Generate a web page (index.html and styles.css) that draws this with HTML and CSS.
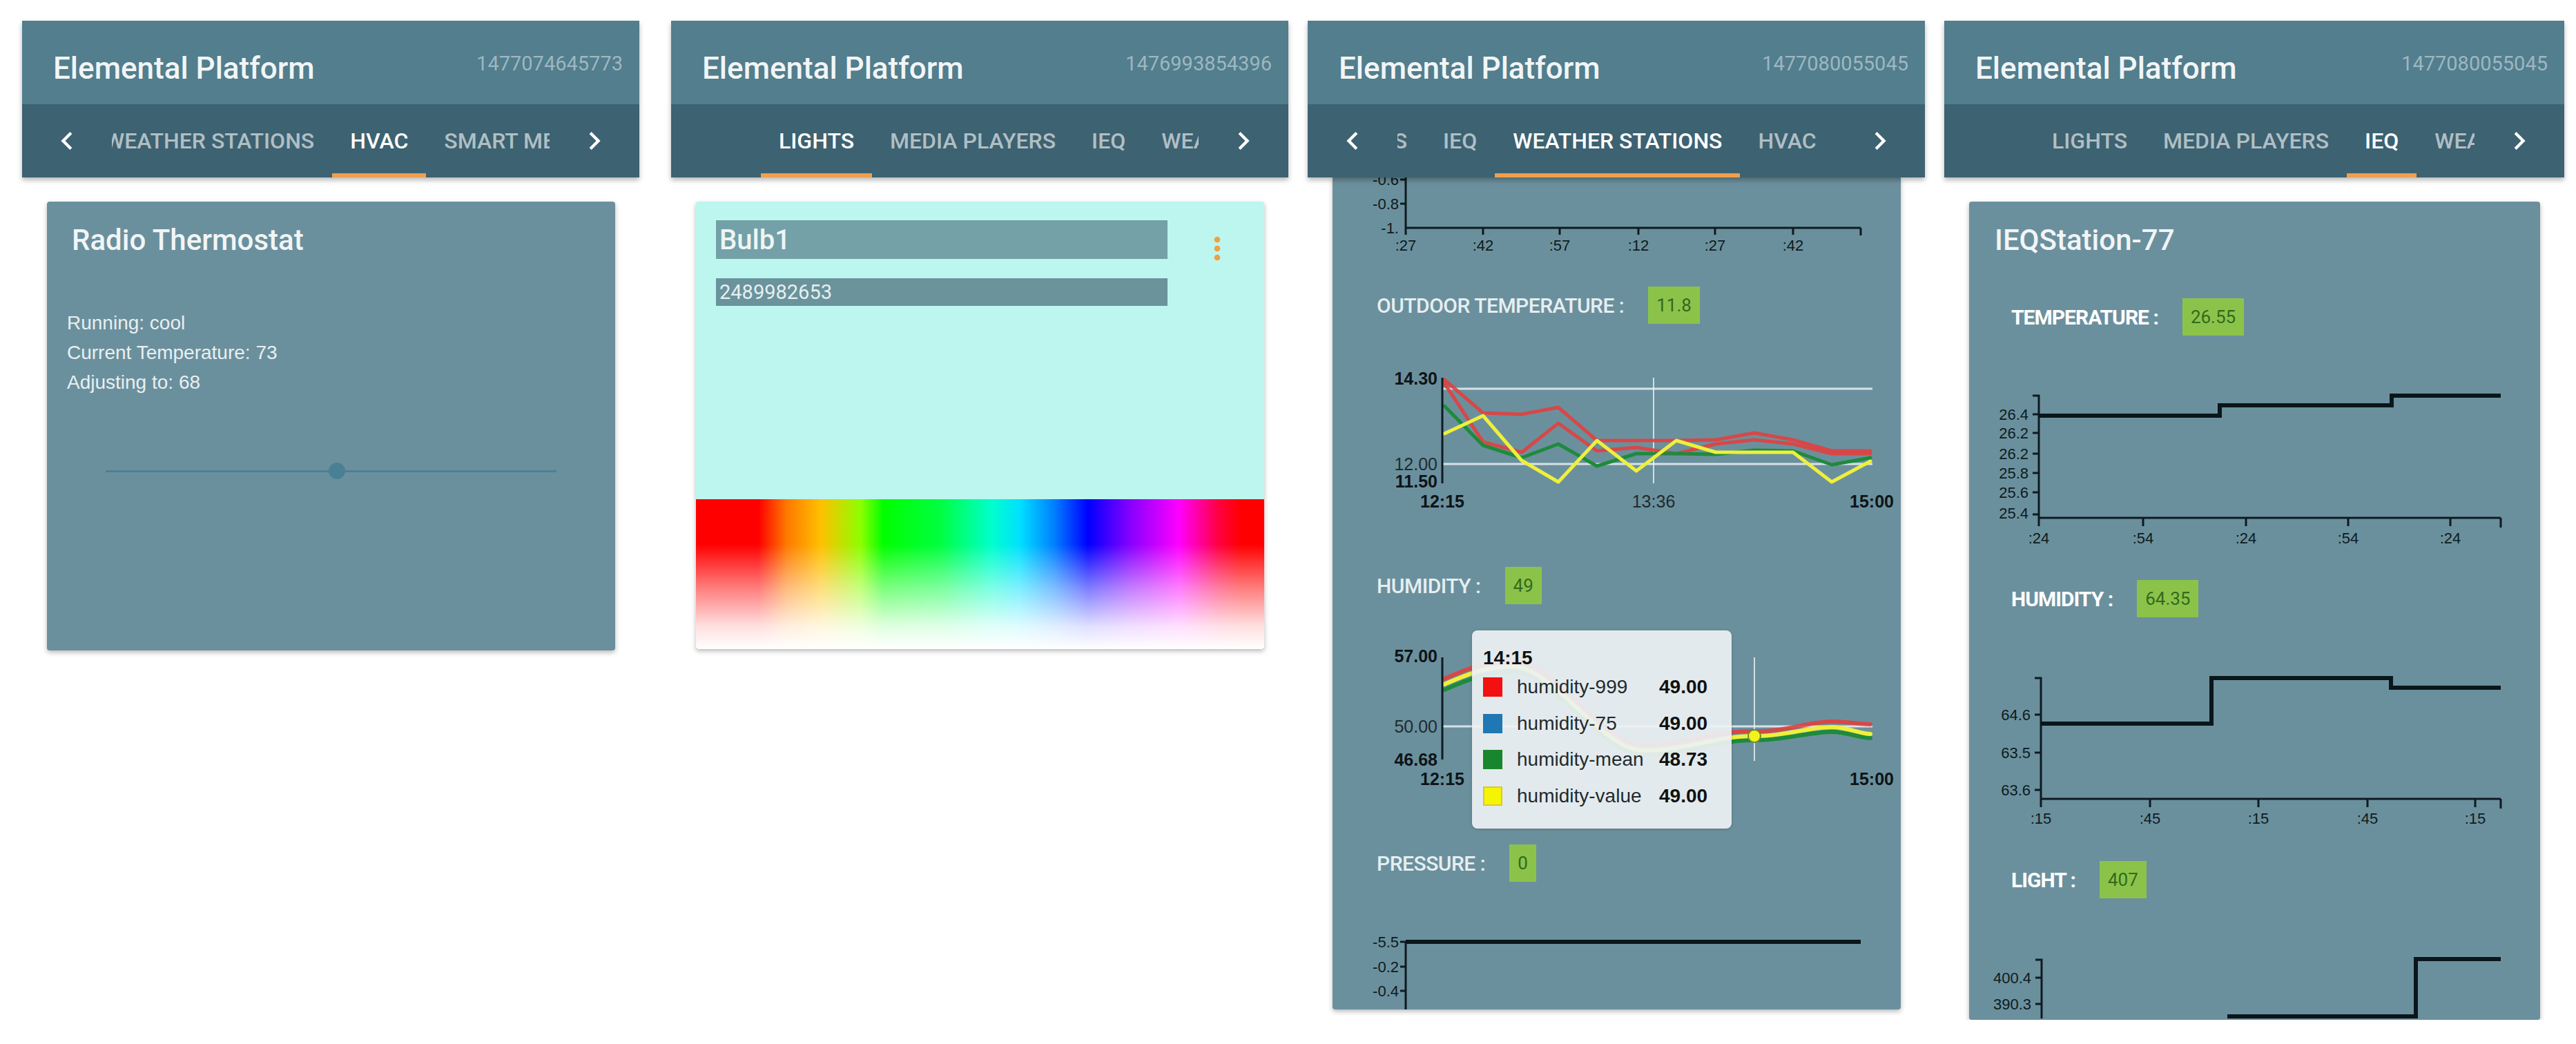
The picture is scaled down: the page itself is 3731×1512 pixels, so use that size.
FILE: index.html
```html
<!DOCTYPE html>
<html lang="en">
<head>
    <meta charset="UTF-8">
    <meta name="viewport" content="width=device-width, initial-scale=1.0">
    <title>Elemental Platform</title>
    <link rel="stylesheet" href="styles.css">
</head>
<body>
<main class="screens">

    <!-- HVAC screen -->
    <section class="screen screen-hvac">
        <header class="appbar">
            <div class="appbar-top">
                <h1>Elemental Platform</h1>
                <span class="stamp">1477074645773</span>
            </div>
            <nav class="tabbar">
                <button class="tab-arrow"><svg viewBox="0 0 24 24"><path d="M15.41 7.41L14 6l-6 6 6 6 1.41-1.41L10.83 12z"/></svg></button>
                <div class="tab-viewport">
                    <div class="tab-strip strip-hvac">
                        <span class="tab">Weather Stations</span>
                        <span class="tab active">HVAC</span>
                        <span class="tab">Smart Meters</span>
                    </div>
                </div>
                <button class="tab-arrow"><svg viewBox="0 0 24 24"><path d="M10 6L8.59 7.41 13.17 12l-4.58 4.59L10 18l6-6z"/></svg></button>
            </nav>
        </header>
        <div class="content">
            <article class="card thermostat">
                <h2 class="card-title">Radio Thermostat</h2>
                <div class="thermo-info">
                    <p>Running: cool</p>
                    <p>Current Temperature: 73</p>
                    <p>Adjusting to: 68</p>
                </div>
                <div class="slider">
                    <div class="slider-track"></div>
                    <div class="slider-thumb"></div>
                </div>
            </article>
        </div>
    </section>

    <!-- Lights screen -->
    <section class="screen screen-lights">
        <header class="appbar">
            <div class="appbar-top">
                <h1>Elemental Platform</h1>
                <span class="stamp">1476993854396</span>
            </div>
            <nav class="tabbar">
                <button class="tab-arrow hidden"><svg viewBox="0 0 24 24"><path d="M15.41 7.41L14 6l-6 6 6 6 1.41-1.41L10.83 12z"/></svg></button>
                <div class="tab-viewport">
                    <div class="tab-strip">
                        <span class="tab active">Lights</span>
                        <span class="tab">Media Players</span>
                        <span class="tab">IEQ</span>
                        <span class="tab">Weather Stations</span>
                    </div>
                </div>
                <button class="tab-arrow"><svg viewBox="0 0 24 24"><path d="M10 6L8.59 7.41 13.17 12l-4.58 4.59L10 18l6-6z"/></svg></button>
            </nav>
        </header>
        <div class="content">
            <article class="card bulb">
                <div class="bulb-head">
                    <div class="bulb-fields">
                        <div class="bulb-name">Bulb1</div>
                        <div class="bulb-id">2489982653</div>
                    </div>
                    <button class="more-btn"><svg viewBox="0 0 24 24"><path d="M12 8c1.1 0 2-.9 2-2s-.9-2-2-2-2 .9-2 2 .9 2 2 2zm0 2c-1.1 0-2 .9-2 2s.9 2 2 2 2-.9 2-2-.9-2-2-2zm0 6c-1.1 0-2 .9-2 2s.9 2 2 2 2-.9 2-2-.9-2-2-2z"/></svg></button>
                </div>
                <div class="color-picker"></div>
            </article>
        </div>
    </section>

    <!-- Weather stations screen (scrolled) -->
    <section class="screen screen-weather">
        <header class="appbar">
            <div class="appbar-top">
                <h1>Elemental Platform</h1>
                <span class="stamp">1477080055045</span>
            </div>
            <nav class="tabbar">
                <button class="tab-arrow"><svg viewBox="0 0 24 24"><path d="M15.41 7.41L14 6l-6 6 6 6 1.41-1.41L10.83 12z"/></svg></button>
                <div class="tab-viewport">
                    <div class="tab-strip strip-weather">
                        <span class="tab">Media Players</span>
                        <span class="tab">IEQ</span>
                        <span class="tab active">Weather Stations</span>
                        <span class="tab">HVAC</span>
                    </div>
                </div>
                <button class="tab-arrow"><svg viewBox="0 0 24 24"><path d="M10 6L8.59 7.41 13.17 12l-4.58 4.59L10 18l6-6z"/></svg></button>
            </nav>
        </header>
        <div class="content scrolled">
            <article class="card station weather">
                <svg class="chart" viewBox="0 0 824 130" width="824" height="130">
                    <path class="axis" d="M106,-20V73H765 M98,3H106 M98,38H106 M106,73V83 M218,73V83 M329,73V83 M443,73V83 M554,73V83 M667,73V83 M765,73V84"/>
                    <text class="tick" x="96" y="3" text-anchor="end">-0.6</text>
                    <text class="tick" x="96" y="38" text-anchor="end">-0.8</text>
                    <text class="tick" x="96" y="73" text-anchor="end">-1.</text>
                    <text class="tick" x="106" y="98" text-anchor="middle">:27</text>
                    <text class="tick" x="218" y="98" text-anchor="middle">:42</text>
                    <text class="tick" x="329" y="98" text-anchor="middle">:57</text>
                    <text class="tick" x="443" y="98" text-anchor="middle">:12</text>
                    <text class="tick" x="554" y="98" text-anchor="middle">:27</text>
                    <text class="tick" x="667" y="98" text-anchor="middle">:42</text>
                </svg>

                <div class="reading reading-first">
                    <span class="reading-label">Outdoor Temperature :</span>
                    <span class="reading-value">11.8</span>
                </div>

                <svg class="chart chart-gap" viewBox="0 260 824 240" width="824" height="240">
                    <path class="grid" d="M159,306H782 M159,415H782"/>
                    <path class="cross" d="M465,290V443"/>
                    <polyline class="series red" points="162,293 218,341 274,343 327,333 383,381 440,381 498,381 555,380 611,370 667,380 723,396 779,396"/>
                    <polyline class="series red" points="162,298 218,383 274,398 327,356 383,396 440,391 498,400 555,386 611,380 667,386 723,400 779,400"/>
                    <polyline class="series green" points="162,331 218,388 274,406 327,386 383,418 440,400 498,400 555,401 611,395 667,396 723,416 779,406"/>
                    <polyline class="series yellow" points="162,371 218,345 274,410 327,441 383,381 440,425 498,381 555,398 611,398 667,398 723,441 779,411"/>
                    <path class="axis" d="M159,290V443"/>
                    <text class="val bold" x="152" y="291" text-anchor="end">14.30</text>
                    <text class="val" x="152" y="415" text-anchor="end">12.00</text>
                    <text class="val bold" x="152" y="440" text-anchor="end">11.50</text>
                    <text class="val bold" x="159" y="469" text-anchor="middle">12:15</text>
                    <text class="val" x="465" y="469" text-anchor="middle">13:36</text>
                    <text class="val bold" x="813" y="469" text-anchor="end">15:00</text>
                </svg>

                <div class="reading reading-second">
                    <span class="reading-label">Humidity :</span>
                    <span class="reading-value">49</span>
                </div>

                <div class="chart-box">
                    <svg class="chart" viewBox="0 640 824 310" width="824" height="310">
                        <path class="grid" d="M159,795H782"/>
                        <path class="cross" d="M611,695V845"/>
                        <path class="curve red" d="M162,726 C185,716 220,700 260,700 C320,700 390,822 450,822 C510,822 560,800 611,802 C650,804 690,788 723,788 C745,788 765,792 779,792"/>
                        <path class="curve green" d="M162,742 C185,732 220,716 260,716 C320,716 390,836 450,836 C510,836 560,814 611,815 C650,816 690,803 723,803 C745,803 765,812 779,812"/>
                        <path class="curve yellow" d="M162,734 C185,724 220,708 260,708 C320,708 390,830 450,830 C510,830 560,808 611,809 C650,810 690,796 723,796 C745,796 765,806 779,806"/>
                        <circle class="hover-dot" cx="611" cy="809" r="9"/>
                        <path class="axis" d="M159,695V843"/>
                        <text class="val bold" x="152" y="693" text-anchor="end">57.00</text>
                        <text class="val" x="152" y="795" text-anchor="end">50.00</text>
                        <text class="val bold" x="152" y="843" text-anchor="end">46.68</text>
                        <text class="val bold" x="159" y="871" text-anchor="middle">12:15</text>
                        <text class="val bold" x="813" y="871" text-anchor="end">15:00</text>
                    </svg>
                    <div class="chart-tip">
                        <div class="tip-time">14:15</div>
                        <div class="tip-row"><span class="swatch sw-red"></span><span>humidity-999</span><b>49.00</b></div>
                        <div class="tip-row"><span class="swatch sw-blue"></span><span>humidity-75</span><b>49.00</b></div>
                        <div class="tip-row"><span class="swatch sw-green"></span><span>humidity-mean</span><b>48.73</b></div>
                        <div class="tip-row"><span class="swatch sw-yellow"></span><span>humidity-value</span><b>49.00</b></div>
                    </div>
                </div>

                <div class="reading reading-third">
                    <span class="reading-label">Pressure :</span>
                    <span class="reading-value">0</span>
                </div>

                <svg class="chart chart-pressure" viewBox="0 1040 824 200" width="824" height="200">
                    <path class="axis" d="M106,1107V1240 M98,1107H106 M98,1143H106 M98,1178H106 M98,1213H106"/>
                    <path class="step" d="M106,1107H765"/>
                    <text class="tick" x="96" y="1107" text-anchor="end">-5.5</text>
                    <text class="tick" x="96" y="1143" text-anchor="end">-0.2</text>
                    <text class="tick" x="96" y="1178" text-anchor="end">-0.4</text>
                </svg>
            </article>
        </div>
    </section>

    <!-- IEQ screen -->
    <section class="screen screen-ieq">
        <header class="appbar">
            <div class="appbar-top">
                <h1>Elemental Platform</h1>
                <span class="stamp">1477080055045</span>
            </div>
            <nav class="tabbar">
                <button class="tab-arrow hidden"><svg viewBox="0 0 24 24"><path d="M15.41 7.41L14 6l-6 6 6 6 1.41-1.41L10.83 12z"/></svg></button>
                <div class="tab-viewport">
                    <div class="tab-strip">
                        <span class="tab">Lights</span>
                        <span class="tab">Media Players</span>
                        <span class="tab active">IEQ</span>
                        <span class="tab">Weather Stations</span>
                    </div>
                </div>
                <button class="tab-arrow"><svg viewBox="0 0 24 24"><path d="M10 6L8.59 7.41 13.17 12l-4.58 4.59L10 18l6-6z"/></svg></button>
            </nav>
        </header>
        <div class="content">
            <article class="card station ieq">
                <h2 class="card-title">IEQStation-77</h2>

                <div class="reading ieq-temp">
                    <span class="reading-label">Temperature :</span>
                    <span class="reading-value">26.55</span>
                </div>
                <svg class="chart ieq-chart-temp" viewBox="0 240 829 270" width="829" height="270">
                    <path class="axis" d="M92,281H101V458H770 M92,308H101 M92,335H101 M92,365H101 M92,393H101 M92,421H101 M92,453H101 M101,458V470 M252,458V470 M401,458V470 M549,458V470 M697,458V470 M770,458V472"/>
                    <path class="step" d="M101,310H363V295H612V281H770"/>
                    <text class="tick" x="86" y="308" text-anchor="end">26.4</text>
                    <text class="tick" x="86" y="335" text-anchor="end">26.2</text>
                    <text class="tick" x="86" y="365" text-anchor="end">26.2</text>
                    <text class="tick" x="86" y="393" text-anchor="end">25.8</text>
                    <text class="tick" x="86" y="421" text-anchor="end">25.6</text>
                    <text class="tick" x="86" y="451" text-anchor="end">25.4</text>
                    <text class="tick" x="101" y="487" text-anchor="middle">:24</text>
                    <text class="tick" x="252" y="487" text-anchor="middle">:54</text>
                    <text class="tick" x="401" y="487" text-anchor="middle">:24</text>
                    <text class="tick" x="549" y="487" text-anchor="middle">:54</text>
                    <text class="tick" x="697" y="487" text-anchor="middle">:24</text>
                </svg>

                <div class="reading ieq-hum">
                    <span class="reading-label">Humidity :</span>
                    <span class="reading-value">64.35</span>
                </div>
                <svg class="chart ieq-chart-hum" viewBox="0 640 829 270" width="829" height="270">
                    <path class="axis" d="M95,691H104V866H770 M95,744H104 M95,799H104 M95,853H104 M104,866V878 M262,866V878 M419,866V878 M577,866V878 M733,866V878 M770,866V880"/>
                    <path class="step" d="M104,757H351V691H611V705H770"/>
                    <text class="tick" x="89" y="744" text-anchor="end">64.6</text>
                    <text class="tick" x="89" y="799" text-anchor="end">63.5</text>
                    <text class="tick" x="89" y="853" text-anchor="end">63.6</text>
                    <text class="tick" x="104" y="894" text-anchor="middle">:15</text>
                    <text class="tick" x="262" y="894" text-anchor="middle">:45</text>
                    <text class="tick" x="419" y="894" text-anchor="middle">:15</text>
                    <text class="tick" x="577" y="894" text-anchor="middle">:45</text>
                    <text class="tick" x="733" y="894" text-anchor="middle">:15</text>
                </svg>

                <div class="reading ieq-light">
                    <span class="reading-label">Light :</span>
                    <span class="reading-value">407</span>
                </div>
                <svg class="chart ieq-chart-light" viewBox="0 1050 829 135" width="829" height="135">
                    <path class="axis" d="M96,1100H105V1200 M96,1126H105 M96,1164H105"/>
                    <path class="step" d="M377,1200V1182H647V1099H770"/>
                    <text class="tick" x="90" y="1126" text-anchor="end">400.4</text>
                    <text class="tick" x="90" y="1164" text-anchor="end">390.3</text>
                </svg>
            </article>
        </div>
    </section>

</main>
</body>
</html>
```

FILE: styles.css
```css
body {
    font-family: 'Roboto', 'Liberation Sans', sans-serif;
    background-color: white;
    margin: 0;
    padding: 0;
    overflow: hidden;
}

.screens {
    display: flex;
    align-items: flex-start;
    gap: 28px;
    padding: 30px 0 0 32px;
}

.screen {
    width: 894px;
    flex-shrink: 0;
}

.screen-hvac {
    margin-right: 18px;
}

.screen-ieq {
    width: 898px;
}

/* App bar */
.appbar {
    position: relative;
    z-index: 2;
    box-shadow: 0 4px 7px rgba(0, 0, 0, 0.28);
}

.appbar-top {
    height: 121px;
    box-sizing: border-box;
    padding: 47px 24px 0 45px;
    display: flex;
    justify-content: space-between;
    align-items: flex-start;
    background-color: #527e8d;
}

.appbar-top h1 {
    margin: 0;
    font-size: 44px;
    line-height: 1;
    font-weight: 500;
    color: #f1f5f6;
}

.stamp {
    font-size: 29px;
    line-height: 1;
    color: #9db7c1;
    padding-top: 1px;
}

.tabbar {
    height: 106px;
    display: flex;
    background-color: #3d6271;
}

.tab-arrow {
    width: 130px;
    flex-shrink: 0;
    border: none;
    background: none;
    padding: 0;
    display: flex;
    align-items: center;
    justify-content: center;
    cursor: pointer;
}

.tab-arrow svg {
    width: 52px;
    height: 52px;
    fill: #ffffff;
}

.tab-arrow.hidden {
    visibility: hidden;
}

.tab-viewport {
    flex: 1;
    overflow: hidden;
}

.tab-strip {
    display: flex;
    height: 100%;
    white-space: nowrap;
}

/* scrolled tab strips */
.strip-hvac {
    margin-left: -36px;
}

.strip-weather {
    margin-left: -252px;
}

.tab {
    position: relative;
    flex-shrink: 0;
    display: flex;
    align-items: center;
    padding: 0 26px;
    font-size: 32px;
    font-weight: 500;
    text-transform: uppercase;
    color: rgba(255, 255, 255, 0.6);
}

.tab.active {
    color: #ffffff;
}

.tab.active::after {
    content: "";
    position: absolute;
    left: 0;
    right: 0;
    bottom: 0;
    height: 6px;
    background-color: #efa04e;
}

/* Content */
.content {
    padding: 35px 35px 0 36px;
}

.content.scrolled {
    padding-top: 0;
}

.card {
    background-color: #6b909d;
    border-radius: 4px;
    box-shadow: 0 3px 7px rgba(0, 0, 0, 0.28);
    color: #eef3f5;
    overflow: hidden;
}

.card-title {
    margin: 0;
    font-size: 42px;
    line-height: 1;
    font-weight: 500;
    color: #f1f5f6;
}

/* Thermostat */
.thermostat {
    height: 650px;
    box-sizing: border-box;
    padding: 35px 29px 0;
}

.thermostat .card-title {
    padding-left: 7px;
}

.thermo-info {
    margin-top: 77px;
    font-family: 'Liberation Sans', Arial, sans-serif;
    font-size: 28px;
    line-height: 43px;
    color: #e9eff1;
}

.thermo-info p {
    margin: 0;
}

.slider {
    position: relative;
    height: 24px;
    margin: 95px 56px 0;
    display: flex;
    align-items: center;
}

.slider-track {
    flex: 1;
    height: 3px;
    background-color: #4d7f91;
}

.slider-thumb {
    position: absolute;
    left: 323px;
    top: 0;
    width: 24px;
    height: 24px;
    border-radius: 50%;
    background-color: #4a8094;
}

/* Bulb */
.bulb {
    height: 648px;
    display: flex;
    flex-direction: column;
    background-color: #bdf6ef;
    border-radius: 3px;
}

.bulb-head {
    display: flex;
    align-items: flex-start;
    padding: 27px 0 0 29px;
}

.bulb-fields {
    width: 654px;
}

.bulb-name {
    height: 56px;
    padding-left: 5px;
    background-color: #74a0a7;
    font-size: 40px;
    font-weight: 500;
    line-height: 58px;
    color: #eef5f5;
}

.bulb-id {
    margin-top: 28px;
    height: 40px;
    padding-left: 5px;
    background-color: #6a939c;
    font-size: 29px;
    line-height: 40px;
    color: #e6eff1;
}

.more-btn {
    margin: 15px 0 0 46px;
    width: 52px;
    height: 52px;
    padding: 0;
    border: none;
    background: none;
}

.more-btn svg {
    width: 52px;
    height: 52px;
    fill: #f0a040;
}

.color-picker {
    margin-top: auto;
    height: 217px;
    background:
        linear-gradient(to bottom, rgba(255, 255, 255, 0) 0%, rgba(255, 255, 255, 0) 30%, rgba(255, 255, 255, 0.5) 60%, rgba(255, 255, 255, 0.88) 85%, #ffffff 100%),
        linear-gradient(to right, #ff0000 0%, #ff0000 11%, #ff7a00 16%, #ffc000 22%, #8cff00 29%, #00ff00 33%, #00ff40 43%, #00ffcc 52%, #00e0ff 57%, #0080ff 63%, #0000ff 69%, #8000ff 76%, #ff00ff 85%, #ff0040 92%, #ff0000 96%, #ff0000 100%);
}

/* Station cards */
.weather {
    height: 1205px;
    border-radius: 0 0 4px 4px;
}

.ieq {
    height: 1185px;
    box-sizing: border-box;
    padding-top: 35px;
}

.ieq .card-title {
    padding-left: 37px;
}

.chart {
    display: block;
    overflow: hidden;
}

.reading {
    display: flex;
    align-items: center;
    gap: 35px;
    height: 54px;
    padding-left: 64px;
}

.reading-label {
    font-size: 30px;
    font-weight: 500;
    letter-spacing: -0.5px;
    text-transform: uppercase;
    color: #e6eef1;
}

.reading-value {
    height: 54px;
    padding: 0 12px;
    font-size: 26px;
    line-height: 54px;
    background-color: #8bc34a;
    color: #33691e;
}

.reading-first {
    margin-top: 28px;
}

.chart-gap {
    margin-top: 48px;
}

.reading-second {
    margin-top: 64px;
}

.chart-box {
    position: relative;
    margin-top: 22px;
}

.reading-third {
    margin-top: 16px;
}

.chart-pressure {
    margin-top: 20px;
}

.ieq .reading {
    padding-left: 61px;
}

.ieq .reading-label {
    font-weight: 700;
    color: #ffffff;
    letter-spacing: -1px;
}

.ieq-temp {
    margin-top: 63px;
}

.ieq-chart-temp {
    margin-top: 46px;
}

.ieq-hum {
    margin-top: 38px;
}

.ieq-chart-hum {
    margin-top: 37px;
}

.ieq-light {
    margin-top: 46px;
}

.ieq-chart-light {
    margin-top: 39px;
}

/* Chart drawing */
.axis {
    fill: none;
    stroke: #0d1b21;
    stroke-width: 3;
}

.step {
    fill: none;
    stroke: #0a161b;
    stroke-width: 6;
}

.grid {
    fill: none;
    stroke: rgba(235, 242, 245, 0.85);
    stroke-width: 3;
}

.cross {
    fill: none;
    stroke: rgba(235, 242, 245, 0.8);
    stroke-width: 2;
}

.series,
.curve {
    fill: none;
    stroke-width: 5;
    stroke-linejoin: round;
    stroke-linecap: round;
}

.curve {
    stroke-width: 6;
}

.red {
    stroke: #e2403f;
    opacity: 0.9;
}

.green {
    stroke: #1d8b3b;
}

.yellow {
    stroke: #eef03c;
}

.hover-dot {
    fill: #f2f21e;
    stroke: #6b8f2c;
    stroke-width: 2;
}

.tick {
    font-family: 'Liberation Sans', Arial, sans-serif;
    font-size: 22px;
    fill: #0d1b21;
    dominant-baseline: central;
}

.val {
    font-family: 'Liberation Sans', Arial, sans-serif;
    font-size: 25px;
    fill: #1f2b30;
    dominant-baseline: central;
}

.val.bold {
    font-weight: 700;
    fill: #0d1418;
}

/* Tooltip over humidity chart */
.chart-tip {
    position: absolute;
    left: 202px;
    top: 16px;
    width: 376px;
    height: 287px;
    box-sizing: border-box;
    padding: 24px 16px 0;
    border-radius: 8px;
    background-color: rgba(237, 241, 243, 0.93);
    box-shadow: 0 1px 4px rgba(0, 0, 0, 0.2);
    font-family: 'Liberation Sans', Arial, sans-serif;
    font-size: 28px;
    color: #222a2e;
}

.tip-time {
    font-weight: 700;
    line-height: 32px;
    color: #111;
}

.tip-row {
    display: grid;
    grid-template-columns: 28px 185px auto;
    column-gap: 21px;
    align-items: center;
    height: 52.5px;
}

.tip-row:first-of-type {
    margin-top: 8px;
}

.tip-row b {
    color: #111;
}

.swatch {
    width: 28px;
    height: 28px;
    box-sizing: border-box;
}

.sw-red {
    background-color: #f21010;
}

.sw-blue {
    background-color: #1f77b4;
}

.sw-green {
    background-color: #18862c;
}

.sw-yellow {
    background-color: #f6f500;
    border: 2px solid #d8c83a;
}
```
